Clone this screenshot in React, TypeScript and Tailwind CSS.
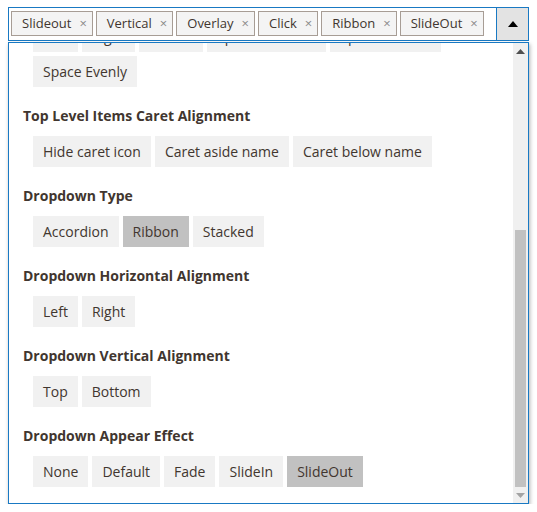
import React from "react";

const tags = ["Slideout", "Vertical", "Overlay", "Click", "Ribbon", "SlideOut"];

interface Section {
  title?: string;
  options: string[];
  selected?: string;
}

const sections: Section[] = [
  { options: ["Left", "Right", "Center", "Space Between", "Space Around", "Space Evenly"] },
  {
    title: "Top Level Items Caret Alignment",
    options: ["Hide caret icon", "Caret aside name", "Caret below name"],
  },
  { title: "Dropdown Type", options: ["Accordion", "Ribbon", "Stacked"], selected: "Ribbon" },
  { title: "Dropdown Horizontal Alignment", options: ["Left", "Right"] },
  { title: "Dropdown Vertical Alignment", options: ["Top", "Bottom"] },
  {
    title: "Dropdown Appear Effect",
    options: ["None", "Default", "Fade", "SlideIn", "SlideOut"],
    selected: "SlideOut",
  },
];

function Tag({ label }: { label: string }) {
  return (
    <div className="flex h-[25px] items-center gap-[8px] border border-[#a79d95] bg-[#f4f4f4] pl-[10px] pr-[5px] text-[13px] text-[#41362f]">
      <span>{label}</span>
      <span className="text-[13px] leading-none text-[#8a8a8a]">×</span>
    </div>
  );
}

export default function App() {
  return (
    <div className="pl-2 pt-[7px] font-['Open_Sans',sans-serif]" style={{ width: 537 }}>
      <div className="flex h-[34px] w-[521px] border border-[#1979c3]">
        <div className="flex flex-1 items-start gap-[3px] pl-[2px] pt-[3px]">
          {tags.map((t) => (
            <Tag key={t} label={t} />
          ))}
        </div>
        <div className="flex w-[32px] items-center justify-center border-l border-[#1979c3] bg-[#e3e3e3]">
          <svg width="10" height="6" viewBox="0 0 10 6">
            <path d="M5 0 L10 6 L0 6 Z" fill="#000" />
          </svg>
        </div>
      </div>

      <div className="mt-[1px] flex h-[462px] w-[521px] border border-[#1979c3] bg-white shadow-[1px_2px_4px_rgba(0,0,0,0.3)]">
        <div className="flex-1 overflow-hidden pl-[14px] text-[#41362f]">
          <div className="-mt-[22px]">
            {sections.map((s, i) => (
              <div key={i} className={i === 0 ? "" : "mt-[19px]"}>
                {s.title && (
                  <div className="mb-[10px] text-[14px] font-bold leading-[20px]">{s.title}</div>
                )}
                <div className="flex flex-wrap gap-[4px] pl-[10px]">
                  {s.options.map((o) => (
                    <div
                      key={o}
                      className={`flex h-[31px] items-center px-[10px] text-[14px] ${
                        o === s.selected ? "bg-[#c1c1c1]" : "bg-[#f1f1f1]"
                      }`}
                    >
                      {o}
                    </div>
                  ))}
                </div>
              </div>
            ))}
          </div>
        </div>

        <div className="flex w-[15px] flex-col bg-[#f0f0f0]">
          <div className="flex h-[16px] items-center justify-center">
            <svg width="9" height="5" viewBox="0 0 9 5">
              <path d="M4.5 0 L9 5 L0 5 Z" fill="#505050" />
            </svg>
          </div>
          <div className="flex-1 pt-[171px]">
            <div className="ml-[2px] h-full w-[11px] bg-[#c1c1c1]" />
          </div>
          <div className="flex h-[16px] items-center justify-center">
            <svg width="9" height="5" viewBox="0 0 9 5">
              <path d="M0 0 L9 0 L4.5 5 Z" fill="#a3a3a3" />
            </svg>
          </div>
        </div>
      </div>
    </div>
  );
}
